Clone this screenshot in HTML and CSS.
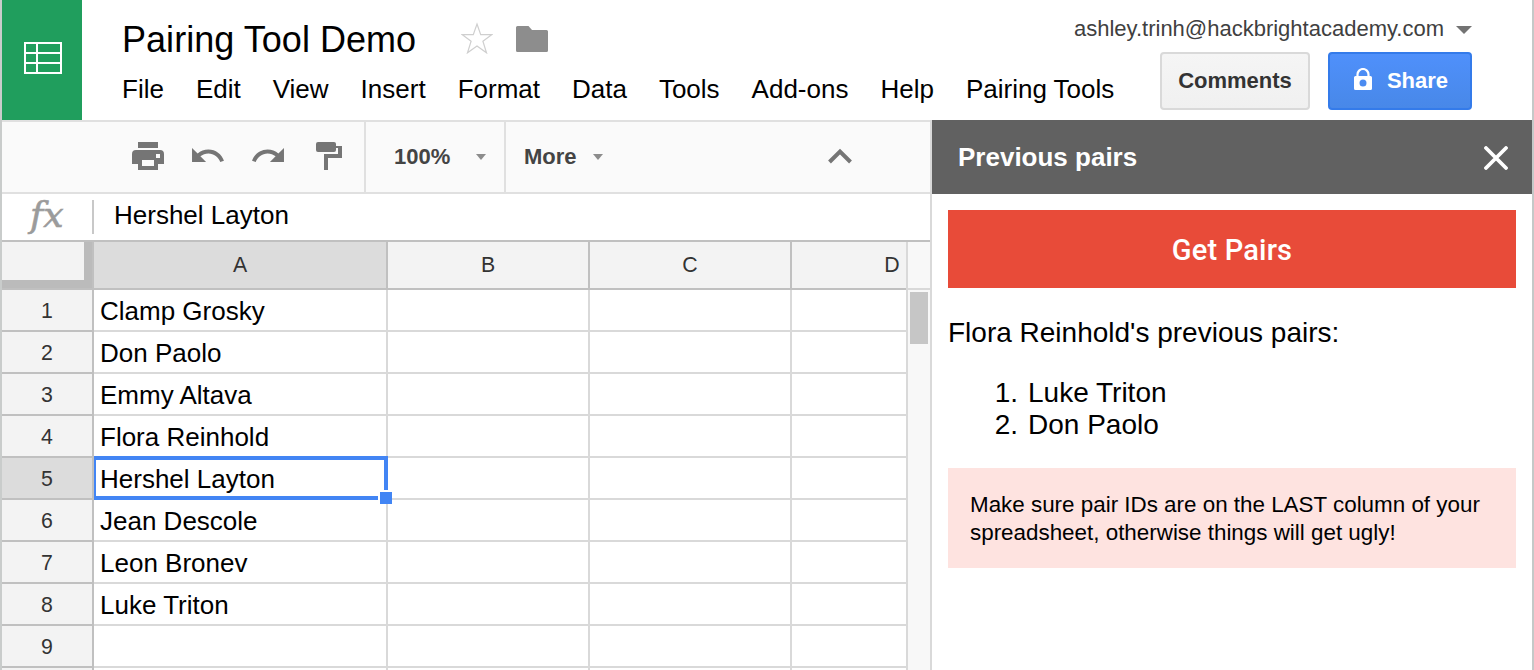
FILE: index.html
```html
<!DOCTYPE html>
<html lang="en">
<head>
<meta charset="utf-8">
<title>Pairing Tool Demo</title>
<link rel="stylesheet" href="styles.css">
</head>
<body>
<div class="app">
  <header class="header">
    <div class="logo">
      <svg width="38" height="32" viewBox="0 0 38 32" fill="none" stroke="#fff" stroke-width="2"><path d="M1 1h36v30H1zM0 11h38M0 21h38M13 0v32"/></svg>
    </div>
    <div class="doc">
      <div class="title-row">
        <h1 class="title">Pairing Tool Demo</h1>
        <svg class="star" width="32" height="32" viewBox="0 0 32 32" fill="none" stroke="#cfcfcf" stroke-width="1.2"><path d="M16 2l3.700 10.600H31L21.900 19.300l3.600 11.500L16 23.900l-9.500 6.900 3.600-11.500L1 12.600h11.300z"/></svg>
        <svg class="folder" width="32" height="26" viewBox="0 0 32 26" fill="#8d8d8d"><path d="M1.500 0H12.500L16 4H30.500Q32 4 32 5.500V24.500Q32 26 30.500 26H1.500Q0 26 0 24.500V1.500Q0 0 1.500 0z"/></svg>
      </div>
      <nav class="menu">
        <span>File</span><span>Edit</span><span>View</span><span>Insert</span><span>Format</span><span>Data</span><span>Tools</span><span>Add-ons</span><span>Help</span><span>Pairing Tools</span>
      </nav>
    </div>
    <div class="account">
      <div class="user"><span class="email">ashley.trinh@hackbrightacademy.com</span><i class="caret caret-lg"></i></div>
      <div class="actions">
        <button class="btn">Comments</button>
        <button class="btn btn-share">
          <svg width="18" height="22" viewBox="0 0 18 22"><path d="M3.500 9V6.500a5.500 5.500 0 0 1 11 0V9" fill="none" stroke="#fff" stroke-width="2.200"/><path fill="#fff" fill-rule="evenodd" d="M1.500 8h15Q18 8 18 9.500v11q0 1.500-1.500 1.500h-15Q0 22 0 20.500v-11Q0 8 1.500 8zM9 11.500a3.500 3.500 0 1 0 0 7a3.500 3.500 0 1 0 0-7z"/></svg>
          <span>Share</span>
        </button>
      </div>
    </div>
  </header>
  <div class="body">
    <main class="sheet">
      <div class="toolbar">
        <div class="tools">
          <svg width="32" height="28" viewBox="0 0 32 28" fill="#757575"><path fill-rule="evenodd" d="M6 0h20v6H6zM4 8h24q4 0 4 4v10h-6v6H6v-6H0V12q0-4 4-4zM10 18v6h12v-6zM24 12v4h4v-4z"/></svg>
          <svg width="32" height="28" viewBox="0 0 32 28" fill="#757575"><path transform="translate(-3.100 -5) scale(1.560)" d="M12.500 8c-2.650 0-5.050.990-6.900 2.600L2 7v9h9l-3.620-3.620c1.390-1.160 3.160-1.880 5.120-1.880 3.540 0 6.550 2.310 7.600 5.500l2.370-.780C21.080 11.030 17.150 8 12.500 8z"/></svg>
          <svg width="32" height="28" viewBox="0 0 32 28" fill="#757575"><path transform="translate(35.100 -5) scale(-1.560 1.560)" d="M12.500 8c-2.650 0-5.050.990-6.900 2.600L2 7v9h9l-3.620-3.620c1.390-1.160 3.160-1.880 5.120-1.880 3.540 0 6.550 2.310 7.600 5.500l2.370-.780C21.080 11.030 17.150 8 12.500 8z"/></svg>
          <svg class="paint" width="26" height="28" viewBox="0 0 26 28" fill="#757575"><path d="M2 0h16q2 0 2 2v2h6v12H12v12H8V12h14V6h-2v2q0 2-2 2H2Q0 10 0 8V2Q0 0 2 0z"/></svg>
        </div>
        <div class="zoom"><span>100%</span><i class="caret"></i></div>
        <div class="more"><span>More</span><i class="caret"></i></div>
        <svg class="collapse" width="24" height="16" viewBox="0 0 24 16" fill="none" stroke="#757575" stroke-width="4"><path d="M1.500 14L12 3.500 22.500 14"/></svg>
      </div>
      <div class="formula"><span class="fx">fx</span><span class="formula-value">Hershel Layton</span></div>
      <div class="grid-wrap">
        <div class="grid">
          <div class="corner"></div><div class="col active">A</div><div class="col">B</div><div class="col">C</div><div class="col">D</div>
          <div class="num">1</div><div class="cell">Clamp Grosky</div><div class="cell"></div><div class="cell"></div><div class="cell"></div>
          <div class="num">2</div><div class="cell">Don Paolo</div><div class="cell"></div><div class="cell"></div><div class="cell"></div>
          <div class="num">3</div><div class="cell">Emmy Altava</div><div class="cell"></div><div class="cell"></div><div class="cell"></div>
          <div class="num">4</div><div class="cell">Flora Reinhold</div><div class="cell"></div><div class="cell"></div><div class="cell"></div>
          <div class="num active">5</div><div class="cell selected">Hershel Layton<i class="handle"></i></div><div class="cell"></div><div class="cell"></div><div class="cell"></div>
          <div class="num">6</div><div class="cell">Jean Descole</div><div class="cell"></div><div class="cell"></div><div class="cell"></div>
          <div class="num">7</div><div class="cell">Leon Bronev</div><div class="cell"></div><div class="cell"></div><div class="cell"></div>
          <div class="num">8</div><div class="cell">Luke Triton</div><div class="cell"></div><div class="cell"></div><div class="cell"></div>
          <div class="num">9</div><div class="cell"></div><div class="cell"></div><div class="cell"></div><div class="cell"></div>
          <div class="num"></div><div class="cell"></div><div class="cell"></div><div class="cell"></div><div class="cell"></div>
        </div>
        <div class="scroll"><div class="scroll-head"></div><div class="thumb"></div></div>
      </div>
    </main>
    <aside class="side">
      <div class="side-head"><h2>Previous pairs</h2>
        <svg width="24" height="24" viewBox="0 0 24 24" stroke="#fff" stroke-width="3.800" stroke-linecap="round"><path d="M2 2l20 20M22 2L2 22"/></svg>
      </div>
      <div class="side-body">
        <button class="get">Get Pairs</button>
        <p class="lead">Flora Reinhold's previous pairs:</p>
        <ol class="pairs"><li><span class="n">1.</span><span>Luke Triton</span></li><li><span class="n">2.</span><span>Don Paolo</span></li></ol>
        <div class="note">Make sure pair IDs are on the LAST column of your<br>spreadsheet, otherwise things will get ugly!</div>
      </div>
    </aside>
  </div>
</div>
</body>
</html>
```
FILE: styles.css
```css
* { box-sizing: border-box; }
body { margin: 0; font-family: "Liberation Sans", Arial, sans-serif; color: #000; background: #fff; }
svg { display: block; flex: none; }
h1, h2, p, ol { margin: 0; padding: 0; font-weight: normal; }
button { font-family: inherit; margin: 0; padding: 0; }

.app { width: 1534px; height: 670px; overflow: hidden; border-left: 2px solid #c9cccb; border-right: 2px solid #c4c9c8; display: flex; flex-direction: column; }

.header { height: 120px; flex: none; display: flex; }
.logo { width: 80px; background: #209e5d; padding: 42px 0 0 22px; }
.doc { padding: 19px 0 0 40px; width: 1040px; }
.title-row { display: flex; height: 42px; }
.title { font-size: 36px; line-height: 42px; width: 339px; white-space: nowrap; letter-spacing: .04px; }
.star { margin-top: 3px; }
.folder { margin: 7px 0 0 23px; }
.menu { display: flex; gap: 32px; font-size: 26px; line-height: 30px; margin-top: 13px; white-space: nowrap; }
.account { flex: 1; display: flex; flex-direction: column; align-items: flex-end; padding: 16px 60px 0 0; margin-left: -60px; }
.user { display: flex; align-items: center; gap: 12px; height: 26px; color: #404040; font-size: 22px; }
.caret { border: 5px solid transparent; border-top: 6px solid #8c8c8c; border-bottom: 0; }
.caret-lg { border-width: 8px 8px 0; border-top-color: #737373; margin-top: 2px; }
.actions { display: flex; gap: 18px; margin-top: 10px; }
.btn { width: 150px; height: 58px; border: 2px solid #d9d9d9; border-radius: 4px; background: linear-gradient(#f5f5f5, #f0f0f0); font-weight: bold; font-size: 22px; color: #333; padding-bottom: 1px; }
.btn-share { width: 144px; display: flex; align-items: center; justify-content: center; gap: 15px; border-color: #347bea; background: linear-gradient(#4f90fb, #4888e8); color: #fff; padding: 0 0 0 2px; }
.btn-share svg { margin-top: -4px; }

.body { flex: 1; display: flex; min-height: 0; }
.sheet { width: 930px; border-right: 2px solid #d9d9d9; display: flex; flex-direction: column; }
.toolbar { height: 74px; flex: none; border-top: 2px solid #e0e0e0; border-bottom: 2px solid #e0e0e0; background: #fafafa; display: flex; align-items: center; color: #444; font-weight: bold; font-size: 22px; }
.tools { width: 364px; height: 100%; border-right: 2px solid #e0e0e0; display: flex; gap: 28px; padding: 20px 0 0 130px; }
.paint { margin-left: 4px; }
.zoom { width: 140px; height: 100%; border-right: 2px solid #e0e0e0; display: flex; align-items: center; justify-content: space-between; padding: 0 18px 0 28px; }
.more { width: 324px; height: 100%; display: flex; align-items: center; gap: 16px; padding: 0 0 0 18px; }
.collapse { margin: -2px 0 0 -2px; }
.formula { height: 48px; flex: none; border-bottom: 2px solid #c0c0c0; display: flex; font-size: 26px; padding-top: 6px; }
.fx { width: 92px; height: 34px; border-right: 2px solid #c8c8c8; padding-left: 28px; font-family: "DejaVu Serif", serif; font-style: italic; font-size: 36px; line-height: 30px; letter-spacing: 0; color: #9b9b9b; -webkit-text-stroke: .6px #9b9b9b; }
.formula-value { padding-left: 20px; line-height: 30px; }

.grid-wrap { flex: 1; display: flex; min-height: 0; }
.grid { width: 904px; overflow: hidden; display: grid; grid-template-columns: 92px 294px 202px 202px 202px; grid-template-rows: 48px; grid-auto-rows: 42px; }
.corner { background: #f3f3f3; border: solid #bbb; border-width: 0 8px 8px 0; margin: 0 2px 2px 0; box-shadow: 2px 0 #c0c0c0, 2px 2px #c0c0c0, 0 2px #c0c0c0; }
.col, .num { background: #f3f3f3; border: solid #c0c0c0; border-width: 0 2px 2px 0; color: #333; font-size: 21.300px; display: flex; align-items: center; justify-content: center; }
.num { padding-top: 3px; }
.col.active, .num.active { background: #dcdcdc; }
.cell { border: solid #d9d9d9; border-width: 0 2px 2px 0; font-size: 26px; line-height: 42px; padding-left: 6px; white-space: nowrap; }
.selected { position: relative; }
.selected::before { content: ""; position: absolute; inset: -2px -2px -2px 0; border: 4px solid #4285f4; border-left-width: 2px; }
.handle { position: absolute; right: -6px; bottom: -6px; width: 14px; height: 14px; background: #4285f4; border: solid #fff; border-width: 2px 0 0 2px; }
.scroll { width: 24px; border-left: 2px solid #d9d9d9; background: #f8f8f8; }
.scroll-head { height: 48px; border-bottom: 2px solid #d9d9d9; }
.thumb { width: 18px; height: 52px; margin: 2px; background: #c6c6c6; }

.side { width: 600px; }
.side-head { height: 74px; background: #616161; color: #fff; display: flex; align-items: center; justify-content: space-between; padding: 2px 24px 0 26px; }
.side-head h2 { font-weight: bold; font-size: 26px; line-height: 30px; margin-top: -2px; }
.side-body { padding: 16px; font-size: 28px; line-height: 32px; }
.get { display: block; width: 568px; height: 78px; border: 0; background: #e84b39; color: #fff; font: 500 29px Roboto, sans-serif; padding-top: 2px; letter-spacing: .2px; }
.lead { margin-top: 29px; }
.pairs { margin-top: 28px; list-style: none; }
.pairs li { display: flex; gap: 10px; }
.n { width: 70px; text-align: right; }
.note { margin-top: 27px; background: #fee3e0; height: 100px; padding: 23px 22px; font-size: 22.400px; line-height: 28px; white-space: nowrap; }
```
